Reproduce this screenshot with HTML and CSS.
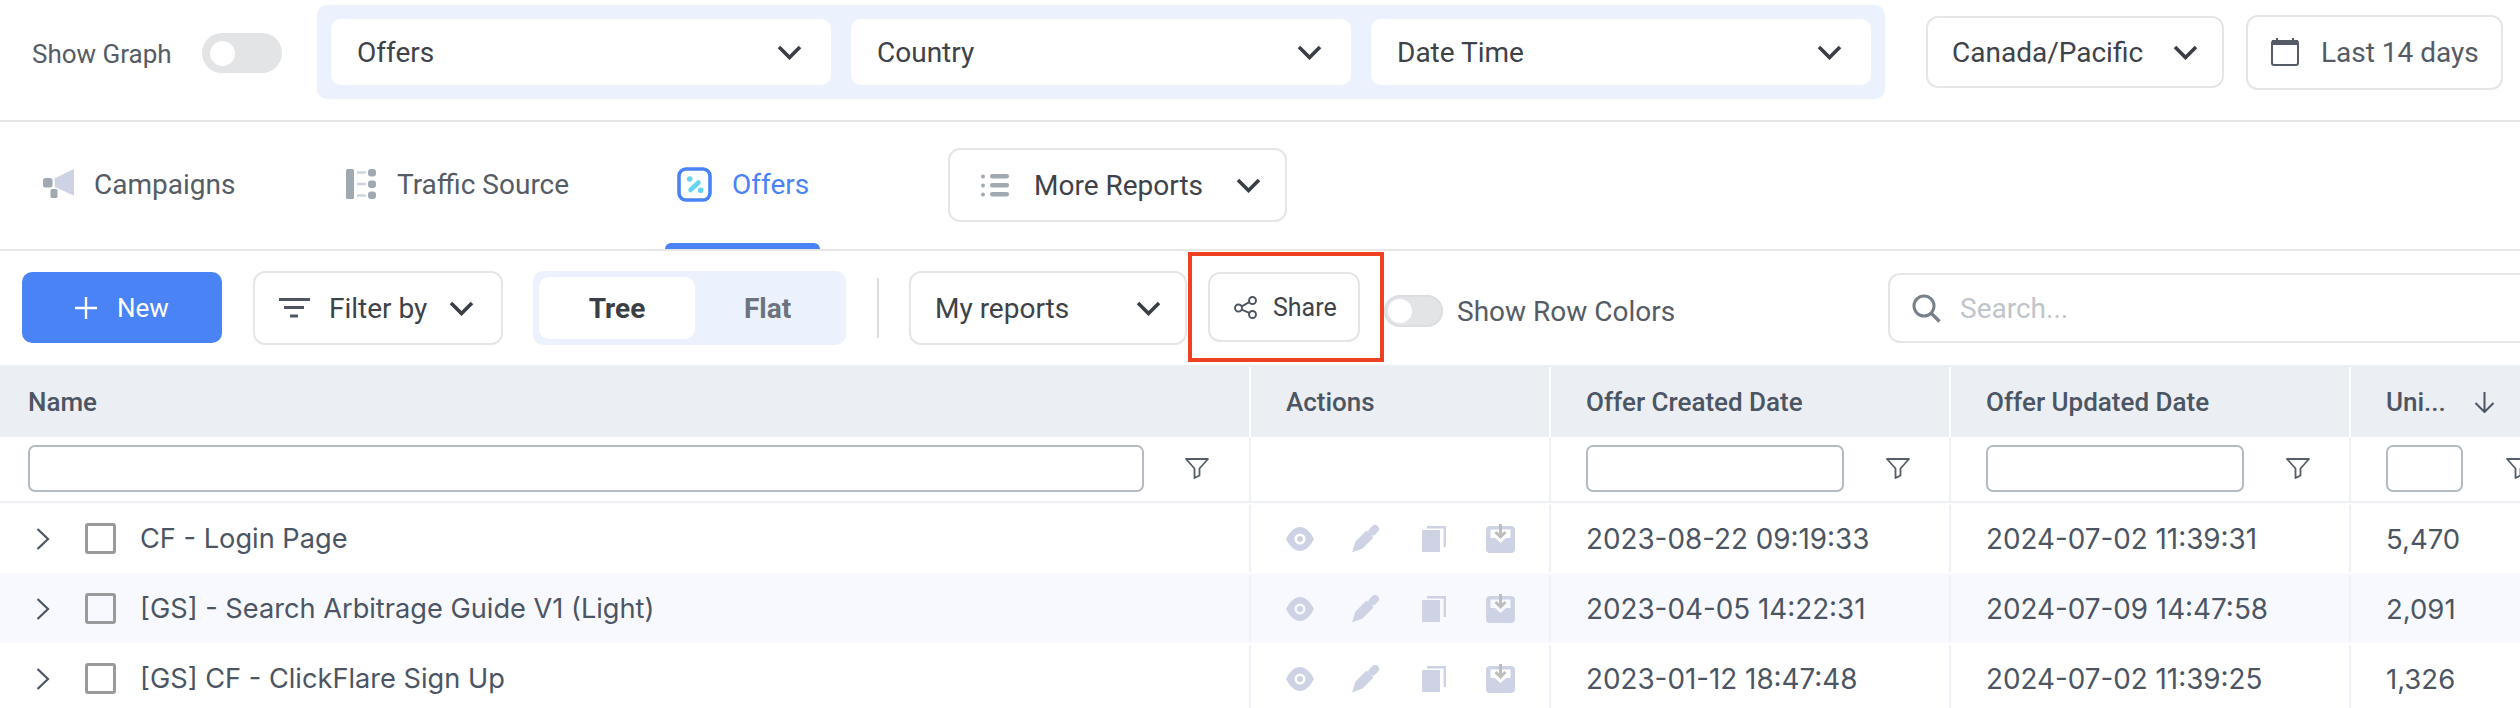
FILE: index.html
```html
<!DOCTYPE html>
<html lang="en">
<head>
<meta charset="utf-8">
<title>Offers report</title>
<link rel="stylesheet" href="styles.css">
</head>
<body>
<svg class="defs" width="0" height="0" aria-hidden="true">
  <symbol id="chev" viewBox="0 0 25 15"><polyline points="2,2 12.5,12.5 23,2" fill="none" stroke="currentColor" stroke-width="3.6"/></symbol>
  <symbol id="funnel" viewBox="0 0 24 21"><path d="M1 1H23L14.5 10.5V17.5L9.5 20V10.5Z" fill="none" stroke="#555d68" stroke-width="1.8" stroke-linejoin="round"/></symbol>
  <symbol id="rowchev" viewBox="0 0 14 22"><polyline points="1.5,1 12,11 1.5,21" fill="none" stroke="#4b5563" stroke-width="2.2"/></symbol>
  <symbol id="eye" viewBox="0 0 28 24"><path fill-rule="evenodd" fill="#cdd3e5" d="M0 12C4 4 9 0 14 0s10 4 14 12c-4 8-9 12-14 12S4 20 0 12zM14 6.5a5.5 5.5 0 1 0 0 11a5.5 5.5 0 1 0 0-11z"/><circle cx="14" cy="12" r="3" fill="#cdd3e5"/></symbol>
  <symbol id="pencil" viewBox="0 0 28 29"><path fill="#cdd3e5" d="M0 28.5L3.5 17.5L14.5 6.5L21.5 13.5L10.500 24.5Z"/><path d="M20.500 7.500L23 5" stroke="#cdd3e5" stroke-width="8" stroke-linecap="round"/></symbol>
  <symbol id="copy" viewBox="0 0 24 26"><rect x="0" y="4" width="18" height="22" rx="1" fill="#cdd3e5"/><path d="M5 1.2H22.8V21" fill="none" stroke="#cdd3e5" stroke-width="2.4"/></symbol>
  <symbol id="inbox" viewBox="0 0 29 29"><path fill-rule="evenodd" fill="#cdd3e5" d="M4 2H25a4 4 0 0 1 4 4V25a4 4 0 0 1-4 4H4a4 4 0 0 1-4-4V6a4 4 0 0 1 4-4zM4.500 5.500V14H9L14.500 19L20 14H24.500V5.500Z"/><path d="M14.500 0V12M9.500 8L14.500 13L19.500 8" fill="none" stroke="#bdbdbd" stroke-width="3"/></symbol>
</svg>

<div class="page">
  <header class="top">
    <span class="top-label">Show Graph</span>
    <span class="switch switch-graph"><span class="knob"></span></span>
    <div class="panel">
      <div class="select"><span>Offers</span><svg class="chev"><use href="#chev"/></svg></div>
      <div class="select"><span>Country</span><svg class="chev"><use href="#chev"/></svg></div>
      <div class="select"><span>Date Time</span><svg class="chev"><use href="#chev"/></svg></div>
    </div>
    <div class="btn tz"><span>Canada/Pacific</span><svg class="chev"><use href="#chev"/></svg></div>
    <div class="btn range">
      <svg class="cal" viewBox="0 0 28 28"><rect x="1" y="3" width="26" height="24" rx="2" fill="none" stroke="#545b66" stroke-width="2"/><rect x="1" y="2" width="26" height="5" fill="#545b66"/><path d="M6 0V3M22 0V3" stroke="#545b66" stroke-width="2"/></svg>
      <span>Last 14 days</span>
    </div>
  </header>

  <nav class="tabs">
    <a class="tab tab-campaigns"><span class="tab-body">
      <svg class="ic-camp" viewBox="0 0 32 30"><path fill="#cdd3e5" d="M11.500 9.500L29.500 0.500Q31 0 31 1.500V25.500Q31 26.500 29.500 26L12 18Z"/><rect x="0" y="9" width="9.500" height="9.500" rx="2.500" fill="#a0a9b2"/><rect x="7.500" y="20" width="7" height="9" rx="1.500" fill="#a0a9b2"/></svg>
      <span>Campaigns</span></span><span class="tab-bar"></span></a>
    <a class="tab tab-traffic"><span class="tab-body">
      <svg class="ic-traffic" viewBox="0 0 30 30"><rect width="8" height="30" rx="1.500" fill="#a0a9b2"/><rect x="22" y="0" width="8" height="7.500" rx="3" fill="#a0a9b2"/><rect x="22" y="11.500" width="8" height="7.500" rx="3" fill="#a0a9b2"/><rect x="22" y="22.500" width="8" height="7.500" rx="3" fill="#a0a9b2"/><path d="M11 3.500H20M11 15H20M11 26.500H20" stroke="#cdd3e5" stroke-width="2.400"/></svg>
      <span>Traffic Source</span></span><span class="tab-bar"></span></a>
    <a class="tab tab-active"><span class="tab-body">
      <svg class="ic-offers" viewBox="0 0 35 35"><rect x="2" y="2" width="31" height="31" rx="7" fill="#fff" stroke="#4a83f5" stroke-width="3.600"/><circle cx="12.700" cy="12" r="2.800" fill="#64d5ee"/><circle cx="23.700" cy="23.300" r="2.800" fill="#64d5ee"/><path d="M13.500 23L21.500 15.500" stroke="#64d5ee" stroke-width="4.500" stroke-linecap="round"/></svg>
      <span>Offers</span></span><span class="tab-bar"></span></a>
    <div class="btn more">
      <svg class="ic-list" viewBox="0 0 28 23"><g fill="#a0a9b2"><circle cx="2" cy="2.500" r="2"/><circle cx="2" cy="11.500" r="2"/><circle cx="2" cy="20.500" r="2"/><rect x="9" y="0" width="19" height="4.500" rx="2.200"/><rect x="9" y="9" width="19" height="4.500" rx="2.200"/><rect x="9" y="18" width="19" height="4.500" rx="2.200"/></g></svg>
      <span>More Reports</span><svg class="chev"><use href="#chev"/></svg>
    </div>
  </nav>

  <section class="toolbar">
    <button class="new"><svg class="plus" viewBox="0 0 22 22"><path d="M11 0V22M0 11H22" stroke="#fff" stroke-width="2.400"/></svg><span>New</span></button>
    <div class="btn filter-by">
      <svg class="ic-filter" viewBox="0 0 31 20"><path d="M0 1.500H31M5 9.500H25M11 18H19" stroke="#4f5661" stroke-width="3"/></svg>
      <span>Filter by</span><svg class="chev"><use href="#chev"/></svg>
    </div>
    <div class="segment"><span class="seg seg-on">Tree</span><span class="seg seg-off">Flat</span></div>
    <span class="vr"></span>
    <div class="btn my-reports"><span>My reports</span><svg class="chev"><use href="#chev"/></svg></div>
    <div class="share-wrap">
      <div class="btn share">
        <svg class="ic-share" viewBox="0 0 23 23"><g fill="none" stroke="#4d5560" stroke-width="1.900"><circle cx="4.500" cy="12" r="3.500"/><circle cx="18.500" cy="4.500" r="3.500"/><circle cx="18.500" cy="18.500" r="3.500"/><path d="M7.700 10.300L15.300 6.200M7.700 13.700L15.300 16.800"/></g></svg>
        <span>Share</span>
      </div>
      <span class="annot"></span>
    </div>
    <span class="switch switch-row"><span class="knob"></span></span>
    <span class="row-colors">Show Row Colors</span>
    <div class="search">
      <svg class="ic-search" viewBox="0 0 29 29"><circle cx="12" cy="12" r="10" fill="none" stroke="#78808b" stroke-width="3"/><path d="M19 19L27.500 27.500" stroke="#78808b" stroke-width="3.400"/></svg>
      <span>Search...</span>
    </div>
  </section>

  <section class="table">
    <div class="grid head">
      <div class="cell c-name">Name</div>
      <div class="cell">Actions</div>
      <div class="cell">Offer Created Date</div>
      <div class="cell">Offer Updated Date</div>
      <div class="cell uni"><span>Uni...</span><svg class="ic-arrow" viewBox="0 0 21 21"><path d="M10.500 0V20M1.500 11L10.500 20L19.500 11" fill="none" stroke="#4b5563" stroke-width="2"/></svg></div>
    </div>
    <div class="grid filters">
      <div class="cell c-name"><span class="input i-name"></span><svg class="funnel"><use href="#funnel"/></svg></div>
      <div class="cell"></div>
      <div class="cell"><span class="input i-date"></span><svg class="funnel"><use href="#funnel"/></svg></div>
      <div class="cell"><span class="input i-date"></span><svg class="funnel"><use href="#funnel"/></svg></div>
      <div class="cell"><span class="input i-uni"></span><svg class="funnel"><use href="#funnel"/></svg></div>
    </div>

    <div class="grid row">
      <div class="cell c-name"><svg class="rowchev"><use href="#rowchev"/></svg><span class="check"></span><span>CF - Login Page</span></div>
      <div class="cell acts"><svg class="a-eye"><use href="#eye"/></svg><svg class="a-pen"><use href="#pencil"/></svg><svg class="a-copy"><use href="#copy"/></svg><svg class="a-inbox"><use href="#inbox"/></svg></div>
      <div class="cell date">2023-08-22 09:19:33</div>
      <div class="cell date">2024-07-02 11:39:31</div>
      <div class="cell">5,470</div>
    </div>
    <div class="grid row alt">
      <div class="cell c-name"><svg class="rowchev"><use href="#rowchev"/></svg><span class="check"></span><span>[GS] - Search Arbitrage Guide V1 (Light)</span></div>
      <div class="cell acts"><svg class="a-eye"><use href="#eye"/></svg><svg class="a-pen"><use href="#pencil"/></svg><svg class="a-copy"><use href="#copy"/></svg><svg class="a-inbox"><use href="#inbox"/></svg></div>
      <div class="cell date">2023-04-05 14:22:31</div>
      <div class="cell date">2024-07-09 14:47:58</div>
      <div class="cell">2,091</div>
    </div>
    <div class="grid row">
      <div class="cell c-name"><svg class="rowchev"><use href="#rowchev"/></svg><span class="check"></span><span>[GS] CF - ClickFlare Sign Up</span></div>
      <div class="cell acts"><svg class="a-eye"><use href="#eye"/></svg><svg class="a-pen"><use href="#pencil"/></svg><svg class="a-copy"><use href="#copy"/></svg><svg class="a-inbox"><use href="#inbox"/></svg></div>
      <div class="cell date">2023-01-12 18:47:48</div>
      <div class="cell date">2024-07-02 11:39:25</div>
      <div class="cell">1,326</div>
    </div>
  </section>
</div>
</body>
</html>
```

FILE: styles.css
```css
* { box-sizing: border-box; }
html, body { margin: 0; padding: 0; background: #fff; }
body { font-family: Roboto, "Liberation Sans", sans-serif; font-size: 28px; color: #3e4249; }
.defs { position: absolute; }
.page { width: 2520px; height: 708px; overflow: hidden; }
svg { display: block; flex: none; }

/* shared */
.chev { width: 25px; height: 15px; color: #3a3e45; }
.btn {
  display: flex; align-items: center; flex: none;
  background: #fff; border: 2px solid #e6e6e6; border-radius: 12px;
}
.switch { display: flex; align-items: center; flex: none; background: #e3e4e6; border-radius: 20px; }
.knob { display: block; background: #fff; border-radius: 50%; }

/* top bar */
.top {
  display: flex; align-items: center;
  height: 122px; padding: 0 0 16px 32px;
  border-bottom: 2px solid #e6e6e6;
}
.top-label { flex: none; width: 170px; margin-top: 3px; font-size: 26px; color: #555c66; }
.switch-graph { width: 80px; height: 40px; padding-left: 8px; margin-top: 2px; }
.switch-graph .knob { width: 25px; height: 25px; }
.panel {
  display: flex; gap: 20px; flex: none;
  width: 1568px; height: 94px; margin-left: 35px; padding: 14px;
  background: #ebf1fd; border-radius: 10px;
}
.select {
  display: flex; align-items: center; justify-content: space-between;
  width: 500px; height: 66px; padding: 0 29px 0 26px;
  background: #fff; border-radius: 10px;
}
.tz { width: 298px; height: 72px; margin-left: 41px; padding: 0 24px; justify-content: space-between; }
.range { width: 257px; height: 75px; margin-left: 22px; padding-left: 23px; color: #545b66; }
.cal { width: 28px; height: 28px; margin-right: 22px; }

/* tabs */
.tabs {
  display: flex; align-items: flex-start;
  height: 129px; padding-left: 31px;
  border-bottom: 2px solid #e6e6e6;
}
.tab { display: flex; flex-direction: column; height: 127px; flex: none; color: #555c66; }
.tab-body { display: flex; align-items: center; flex: 1; padding: 3px 12px 0; }
.tab-bar { display: block; height: 6px; border-radius: 8px 8px 0 0; }
.tab-campaigns { width: 216px; margin-right: 87px; }
.tab-traffic { width: 248px; margin-right: 83px; }
.tab-active { width: 155px; color: #4a83f5; }
.tab-active .tab-bar { background: #4a83f5; }
.ic-camp { width: 32px; height: 30px; margin-right: 19px; }
.ic-traffic { width: 30px; height: 30px; margin-right: 21px; }
.ic-offers { width: 35px; height: 35px; margin-right: 20px; }
.more { width: 339px; height: 74px; margin: 26px 0 0 128px; padding-left: 31px; }
.ic-list { width: 28px; height: 23px; margin-right: 25px; }
.more .chev { margin-left: 33px; }

/* toolbar */
.toolbar { display: flex; align-items: flex-start; height: 114px; padding: 20px 0 0 22px; }
.new {
  display: flex; align-items: center; flex: none;
  width: 200px; height: 71px; margin-top: 1px; padding: 0 0 0 53px;
  background: #4a83f5; border: 0; border-radius: 10px;
  font: inherit; font-size: 26px; color: #fff;
}
.plus { width: 22px; height: 22px; margin-right: 20px; }
.filter-by { width: 250px; height: 74px; margin-left: 31px; padding-left: 24px; }
.ic-filter { width: 31px; height: 20px; margin-right: 19px; }
.filter-by .chev { margin-left: 22px; }
.segment {
  display: flex; flex: none; width: 313px; height: 74px; margin-left: 30px; padding: 6px;
  background: #ebf1fd; border-radius: 10px;
}
.seg {
  display: flex; align-items: center; justify-content: center; flex: none;
  height: 62px; border-radius: 10px;
  font-weight: 700; color: #6c737e;
}
.seg-on { width: 156px; background: #fff; color: #3a3e45; }
.seg-off { width: 145px; }
.vr { flex: none; width: 2px; height: 60px; margin: 7px 0 0 31px; background: #dedede; }
.my-reports { width: 278px; height: 74px; margin-left: 30px; padding: 0 24px 0 24px; justify-content: space-between; }
.share-wrap { position: relative; flex: none; width: 152px; height: 70px; margin: 1px 0 0 21px; }
.share { width: 152px; height: 70px; padding-left: 24px; font-size: 25px; }
.ic-share { width: 23px; height: 23px; margin-right: 16px; }
.annot { position: absolute; left: -20px; top: -20px; width: 196px; height: 110px; border: 4px solid #ee4023; }
.switch-row { width: 59px; height: 32px; margin: 24px 0 0 24px; padding-left: 4px; box-shadow: inset 0 0 0 2px #dcdee2; }
.switch-row .knob { width: 24px; height: 24px; }
.row-colors { flex: none; width: 217px; margin: 24px 0 0 14px; color: #555c66; white-space: nowrap; }
.search {
  display: flex; align-items: center; flex: none;
  width: 700px; height: 70px; margin: 2px 0 0 214px; padding-left: 22px;
  border: 2px solid #e6e6e6; border-radius: 12px;
  color: #c0c4cb;
}
.ic-search { width: 29px; height: 29px; margin-right: 19px; }

/* table */
.grid { display: grid; grid-template-columns: 1249px 300px 400px 400px 171px; }
.cell { display: flex; align-items: center; min-width: 0; padding-left: 35px; border-left: 2px solid #fff; white-space: nowrap; }
.c-name { padding-left: 28px; border-left: 0; }
.head { height: 72px; padding-top: 2px; background: #ebeef3; font-size: 26px; font-weight: 500; color: #4b5563; }
.uni .ic-arrow { width: 21px; height: 21px; margin-left: 28px; }
.filters { height: 66px; border-bottom: 2px solid #eef1f5; }
.filters .cell { border-left-color: #eef1f5; padding-bottom: 2px; }
.input { display: block; flex: none; height: 47px; border: 2px solid #b5bbc2; border-radius: 7px; background: #fff; }
.i-name { width: 1116px; margin-right: 41px; }
.i-date { width: 258px; margin-right: 42px; }
.i-uni { width: 77px; margin-right: 43px; }
.funnel { width: 24px; height: 21px; }
.row { height: 70px; font-family: Inter, Roboto, sans-serif; font-size: 27.5px; color: #4b5563; }
.alt { background: #f8f9fe; }
.row .cell { margin: 2px 0 1px; border-left-color: #eef1f7; }
.row .c-name { border-left: 0; padding-left: 36px; font-size: 27.200px; }
.row .date { font-size: 27.800px; }
.rowchev { width: 14px; height: 22px; margin-right: 35px; }
.check { flex: none; width: 31px; height: 31px; margin-right: 24px; border: 3px solid #9a9a9a; border-radius: 3px; }
.a-eye { width: 28px; height: 24px; margin-right: 38px; }
.a-pen { width: 28px; height: 29px; margin-right: 42px; }
.a-copy { width: 24px; height: 26px; margin-right: 40px; }
.a-inbox { width: 29px; height: 29px; }
```
